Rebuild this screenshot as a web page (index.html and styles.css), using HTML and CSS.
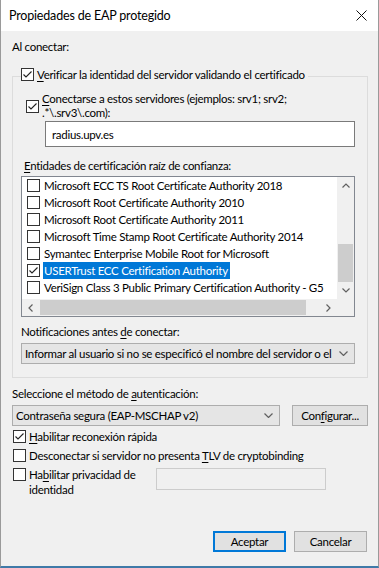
FILE: index.html
```html
<!DOCTYPE html>
<html lang="es">
  <head>
    <meta charset="UTF-8" />
    <meta name="viewport" content="width=device-width, initial-scale=1.0" />
    <title>Propiedades de EAP protegido</title>
    <link rel="stylesheet" href="styles.css">
  </head>
  <body>
    <div class="window">
      <div class="titlebar">
        <span class="title">Propiedades de EAP protegido</span>
        <svg class="close" width="11" height="11" viewBox="0 0 11 11">
          <path d="M0.5 0.5 L10.5 10.5 M10.5 0.5 L0.5 10.5" />
        </svg>
      </div>

      <div class="content">
        <div class="label first">Al conectar:</div>

        <fieldset class="group">
          <legend class="check-row">
            <span class="box"><svg viewBox="0 0 11 11"><path d="M1.5 5.5 L4 8 L9.5 2.5" /></svg></span>
            <span><u>V</u>erificar la identidad del servidor validando el certificado</span>
          </legend>

          <div class="check-row multi servers">
            <span class="box"><svg viewBox="0 0 11 11"><path d="M1.5 5.5 L4 8 L9.5 2.5" /></svg></span>
            <span><u>C</u>onectarse a estos servidores (ejemplos: srv1; srv2;<br>.*\.srv3\.com):</span>
          </div>

          <div class="textbox">radius.upv.es</div>

          <div class="label list-label"><u>E</u>ntidades de certificación raíz de confianza:</div>

          <div class="listbox">
            <div class="items">
              <div class="item"><span class="box"></span><span class="text">Microsoft ECC TS Root Certificate Authority 2018</span></div>
              <div class="item"><span class="box"></span><span class="text">Microsoft Root Certificate Authority 2010</span></div>
              <div class="item"><span class="box"></span><span class="text">Microsoft Root Certificate Authority 2011</span></div>
              <div class="item"><span class="box"></span><span class="text">Microsoft Time Stamp Root Certificate Authority 2014</span></div>
              <div class="item"><span class="box"></span><span class="text">Symantec Enterprise Mobile Root for Microsoft</span></div>
              <div class="item"><span class="box"><svg viewBox="0 0 11 11"><path d="M1.5 5.5 L4 8 L9.5 2.5" /></svg></span><span class="text selected">USERTrust ECC Certification Authority</span></div>
              <div class="item"><span class="box"></span><span class="text">VeriSign Class 3 Public Primary Certification Authority - G5</span></div>
            </div>

            <div class="vscroll">
              <div class="arrow"><svg width="8" height="5" viewBox="0 0 8 5"><path d="M0.5 4.5 L4 1 L7.5 4.5" /></svg></div>
              <div class="track"><div class="thumb"></div></div>
              <div class="arrow"><svg width="8" height="5" viewBox="0 0 8 5"><path d="M0.5 0.5 L4 4 L7.5 0.5" /></svg></div>
            </div>

            <div class="hscroll">
              <div class="arrow"><svg width="5" height="8" viewBox="0 0 5 8"><path d="M4.5 0.5 L1 4 L4.5 7.5" /></svg></div>
              <div class="track"><div class="thumb"></div></div>
              <div class="arrow"><svg width="5" height="8" viewBox="0 0 5 8"><path d="M0.5 0.5 L4 4 L0.5 7.5" /></svg></div>
            </div>

            <div class="corner"></div>
          </div>

          <div class="label notify-label">Notificaciones antes <u>d</u>e conectar:</div>

          <div class="combo notify">
            <span>Informar al usuario si no se especificó el nombre del servidor o el</span>
            <svg width="9" height="5" viewBox="0 0 9 5"><path d="M0.5 0.5 L4.5 4.5 L8.5 0.5" /></svg>
          </div>
        </fieldset>

        <div class="label method-label">Seleccione el método de <u>a</u>utenticación:</div>

        <div class="method-row">
          <div class="combo method">
            <span>Contraseña segura (EAP-MSCHAP v2)</span>
            <svg width="9" height="5" viewBox="0 0 9 5"><path d="M0.5 0.5 L4.5 4.5 L8.5 0.5" /></svg>
          </div>
          <button class="btn config">Con<u>f</u>igurar...</button>
        </div>

        <div class="check-row option first-option">
          <span class="box"><svg viewBox="0 0 11 11"><path d="M1.5 5.5 L4 8 L9.5 2.5" /></svg></span>
          <span><u>H</u>abilitar reconexión rápida</span>
        </div>

        <div class="check-row option">
          <span class="box"></span>
          <span>Desconectar si servidor no presenta <u>T</u>LV de cryptobinding</span>
        </div>

        <div class="check-row privacy">
          <span class="box"></span>
          <span class="privacy-text">Ha<u>b</u>ilitar privacidad de<br>identidad</span>
          <div class="textbox disabled"></div>
        </div>

        <div class="actions">
          <button class="btn default">Aceptar</button>
          <button class="btn">Cancelar</button>
        </div>
      </div>
    </div>
  </body>
</html>
```

FILE: styles.css
```css
* {
  box-sizing: border-box;
}

body {
  margin: 0;
  font-family: Lato, "Noto Sans", sans-serif;
  font-size: 11.5px;
  letter-spacing: -0.28px;
  line-height: 15px;
  color: #000;
  background: #f0f0f0;
}

.window {
  width: 379px;
  height: 568px;
  background: #f0f0f0;
  border-left: 1px solid #9a9a9a;
  border-right: 1px solid #9a9a9a;
  border-bottom: 2px solid #3f7aa8;
  overflow: hidden;
}

.titlebar {
  height: 31px;
  background: #fff;
  display: flex;
  align-items: center;
  justify-content: space-between;
  padding: 0 11px 0 8px;
}

.title {
  font-size: 12.5px;
  letter-spacing: -0.18px;
}

.close {
  fill: none;
  stroke: #111;
  stroke-width: 1;
}

.content {
  padding: 8px 10px 0 11px;
}

.label {
  white-space: nowrap;
}

u {
  text-decoration-thickness: 1px;
  text-underline-offset: 2px;
}

/* checkboxes */
.box {
  flex: none;
  width: 13px;
  height: 13px;
  border: 1px solid #333;
  background: #fff;
}

.box svg {
  display: block;
  width: 11px;
  height: 11px;
  fill: none;
  stroke: #222;
  stroke-width: 1.1;
}

.check-row {
  display: flex;
  align-items: center;
  gap: 3px;
  white-space: nowrap;
}

/* group box */
.group {
  margin: 13px 0 0;
  padding: 0 12px 13px 8px;
  border: 1px solid #dcdcdc;
  min-inline-size: 0;
}

.group legend {
  padding: 0 3px 3px 0;
  margin: 0;
}

.servers {
  margin: 7px 0 0 5px;
  line-height: 14px;
}

.textbox {
  height: 26px;
  margin: 1px 0 0 24px;
  padding: 0 6px;
  border: 1px solid #7a7a7a;
  background: #fff;
  display: flex;
  align-items: center;
}

.list-label {
  margin: 11px 0 0 3px;
}

.listbox {
  height: 141px;
  margin-top: 3px;
  border: 1px solid #828790;
  background: #fff;
  display: grid;
  grid-template-columns: 1fr 17px;
  grid-template-rows: 1fr 17px;
  overflow: hidden;
}

.items {
  overflow: hidden;
  padding-left: 5px;
}

.item {
  height: 17px;
  display: flex;
  align-items: center;
  gap: 3px;
  white-space: nowrap;
}

.item .text {
  padding: 1px 2px 1px 1px;
}

.item .selected {
  background: #0078d7;
  color: #fff;
}

.vscroll,
.hscroll,
.corner {
  background: #f0f0f0;
}

.vscroll {
  display: flex;
  flex-direction: column;
}

.hscroll {
  display: flex;
}

.arrow {
  flex: none;
  width: 17px;
  height: 17px;
  display: flex;
  align-items: center;
  justify-content: center;
}

.arrow svg,
.combo svg {
  fill: none;
  stroke: #606060;
  stroke-width: 1.2;
}

.track {
  flex: 1;
  display: flex;
}

.vscroll .track {
  flex-direction: column;
  justify-content: flex-end;
}

.vscroll .thumb {
  width: 15px;
  height: 38px;
  margin-left: 1px;
  background: #cdcdcd;
}

.hscroll .track {
  padding-left: 1px;
}

.hscroll .thumb {
  width: 266px;
  height: 15px;
  margin-top: 1px;
  background: #cdcdcd;
}

.notify-label {
  margin-top: 7px;
}

.combo {
  height: 21px;
  border: 1px solid #adadad;
  background: #e5e5e5;
  display: flex;
  align-items: center;
  justify-content: space-between;
  padding: 0 6px 0 3px;
  white-space: nowrap;
  overflow: hidden;
}

.notify {
  margin-top: 4px;
}

/* bottom part */
.method-label {
  margin-top: 8px;
}

.method-row {
  margin-top: 4px;
  display: flex;
  gap: 12px;
}

.method {
  width: 268px;
}

.btn {
  height: 21px;
  padding: 0;
  font: inherit;
  letter-spacing: inherit;
  color: #000;
  background: #e1e1e1;
  border: 1px solid #adadad;
}

.config {
  width: 76px;
}

.option {
  height: 19px;
  padding-left: 1px;
}

.first-option {
  margin-top: 1px;
}

.privacy {
  align-items: flex-start;
  padding: 2px 0 0 1px;
}

.privacy .box {
  margin-top: 1px;
}

.privacy-text {
  width: 124px;
}

.textbox.disabled {
  width: 170px;
  height: 22px;
  margin: 1px 0 0 0;
  border-color: #cccccc;
  background: #f0f0f0;
}

.actions {
  margin-top: 34px;
  display: flex;
  justify-content: flex-end;
  gap: 8px;
  padding-right: 1px;
}

.actions .btn {
  width: 73px;
}

.btn.default {
  border: 2px solid #0078d7;
}
```
